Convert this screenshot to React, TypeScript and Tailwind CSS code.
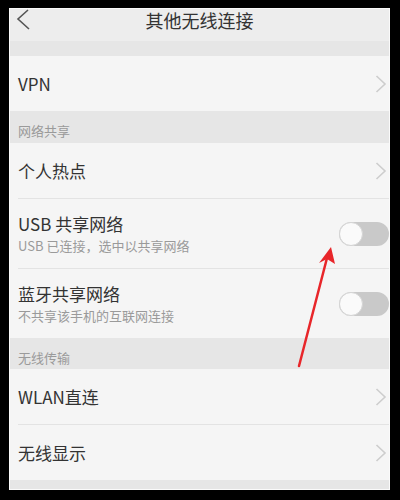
import React from 'react';

const font = { fontFamily: '"Noto Sans CJK SC", "Noto Sans", sans-serif' };

const Chevron: React.FC = () => (
  <svg width="12" height="18" viewBox="0 0 12 18" className="shrink-0">
    <path d="M1.5 1 L10 9 L1.5 17" fill="none" stroke="#cdcdcd" strokeWidth="1.6" />
  </svg>
);

const Toggle: React.FC = () => (
  <div className="relative w-[50px] h-[24px] rounded-full bg-[#c9c9c9] shrink-0">
    <div className="absolute left-0 top-0 w-[24px] h-[24px] rounded-full bg-[#fafafa] border border-[#d4d4d4]" />
  </div>
);

const LinkRow: React.FC<{ label: string; divider?: boolean }> = ({ label, divider }) => (
  <div className="flex flex-col bg-[#f5f5f5]">
    {divider && <div className="ml-[8px] h-px bg-[#e3e3e3]" />}
    <div className="flex items-center justify-between h-[55px] pl-[8px] pr-[2px]">
      <span className="text-[17px] leading-[22px] text-[#333]">{label}</span>
      <Chevron />
    </div>
  </div>
);

const SwitchRow: React.FC<{ label: string; hint: string }> = ({ label, hint }) => (
  <div className="flex flex-col bg-[#f5f5f5]">
    <div className="ml-[8px] h-px bg-[#e3e3e3]" />
    <div className="flex items-center justify-between h-[69px] pl-[8px] pr-0">
      <div className="flex flex-col gap-[2px]">
        <span className="text-[17px] leading-[22px] text-[#333]">{label}</span>
        <span className="text-[13px] leading-[18px] text-[#9a9a9a]">{hint}</span>
      </div>
      <Toggle />
    </div>
  </div>
);

const Section: React.FC<{ title: string; h: string }> = ({ title, h }) => (
  <div className={`${h} bg-[#e6e6e6] pl-[8px] pt-[12px]`}>
    <span className="block text-[13px] leading-[16px] text-[#9a9a9a]">{title}</span>
  </div>
);

export default function App() {
  return (
    <div className="relative w-[400px] h-[500px] bg-black pt-[8px] pl-[9px] pr-[10px] pb-[10px]" style={font}>
      <div className="flex flex-col h-full border border-[#fafafa] overflow-hidden bg-[#e6e6e6]">
        {/* 标题栏 */}
        <div className="relative h-[32px] bg-[#ededed] flex justify-center">
          <svg className="absolute left-[6px] top-0" width="14" height="22" viewBox="0 0 14 22">
            <path d="M12 1 L2 10 L13 20" fill="none" stroke="#555" strokeWidth="1.6" />
          </svg>
          <span className="text-[18px] leading-[22px] text-[#333]">其他无线连接</span>
        </div>
        <div className="h-[15px] bg-[#e6e6e6]" />
        <LinkRow label="VPN" />
        <Section title="网络共享" h="h-[32px]" />
        <LinkRow label="个人热点" />
        <SwitchRow label="USB 共享网络" hint="USB 已连接，选中以共享网络" />
        <SwitchRow label="蓝牙共享网络" hint="不共享该手机的互联网连接" />
        <Section title="无线传输" h="h-[31px]" />
        <LinkRow label="WLAN直连" />
        <LinkRow label="无线显示" divider />
        <div className="flex-1 bg-[#e6e6e6]" />
      </div>

      {/* 红色指示箭头 */}
      <svg className="absolute inset-0 pointer-events-none" width="400" height="500" viewBox="0 0 400 500">
        <path d="M299 366 L327 258" stroke="#e8262a" strokeWidth="2.5" strokeLinecap="round" />
        <polygon points="331,247 319,263 327,259 335,264" fill="#e8262a" />
      </svg>
    </div>
  );
}
